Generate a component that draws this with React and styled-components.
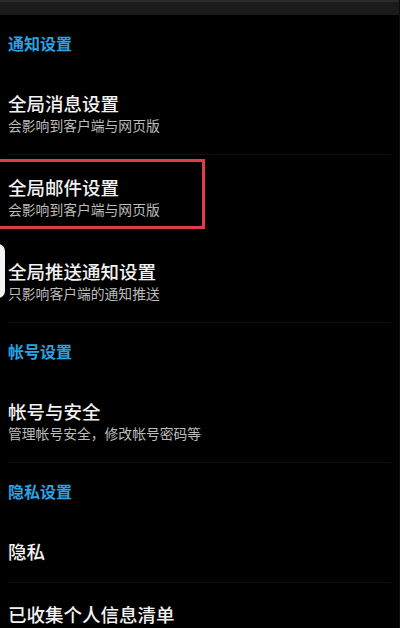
import React from "react";
import styled, { createGlobalStyle } from "styled-components";

const GlobalStyle = createGlobalStyle`
  body {
    margin: 0;
    background: #000;
    font-family: "Noto Sans CJK SC", "Noto Sans", sans-serif;
  }
`;

const Page = styled.div`
  width: 400px;
  height: 628px;
  overflow: hidden;
  background: #000;
  border-right: 1px solid #0d0d0d;
  box-sizing: border-box;
  position: relative;
`;

const TopBar = styled.div`
  height: 13px;
  background: #1b1b1b;
  border-top: 2px solid #2a2a2a;
`;

const SectionHeader = styled.div`
  height: 56px;
  display: flex;
  align-items: center;
  padding: 0 8px;
  color: #2ba2e4;
  font-size: 16px;
  font-weight: 700;
  line-height: 20px;
`;

const Item = styled.div`
  position: relative;
  height: ${(props) => props.h || 84}px;
  margin: 0 8px;
  display: flex;
  flex-direction: column;
  justify-content: center;
  gap: 3px;
  border-bottom: 1px solid ${(props) => (props.divider ? "#0f0f0f" : "transparent")};
  box-sizing: border-box;
`;

const Title = styled.div`
  color: #f2f2f2;
  font-size: 18.5px;
  font-weight: 500;
  line-height: 22px;
`;

const Sub = styled.div`
  color: #bcbcbc;
  font-size: 13.8px;
  line-height: 17px;
`;

const Highlight = styled.div`
  position: absolute;
  left: -12px;
  top: 4px;
  width: 209px;
  height: 70px;
  border: 3px solid #e33a4c;
  box-sizing: border-box;
  pointer-events: none;
`;

const EdgeTab = styled.div`
  position: absolute;
  left: -9px;
  top: 244px;
  width: 14px;
  height: 54px;
  border-radius: 7px;
  background: #f4f4f4;
`;

const sections = [
  {
    header: "通知设置",
    items: [
      { title: "全局消息设置", sub: "会影响到客户端与网页版", divider: true },
      { title: "全局邮件设置", sub: "会影响到客户端与网页版", marked: true },
      { title: "全局推送通知设置", sub: "只影响客户端的通知推送", divider: true },
    ],
  },
  {
    header: "帐号设置",
    items: [{ title: "帐号与安全", sub: "管理帐号安全，修改帐号密码等", divider: true }],
  },
  {
    header: "隐私设置",
    items: [
      { title: "隐私", h: 64, divider: true },
      { title: "已收集个人信息清单", h: 62 },
    ],
  },
];

export default function App() {
  return (
    <Page>
      <GlobalStyle />
      <TopBar />
      {sections.map((s) => (
        <React.Fragment key={s.header}>
          <SectionHeader>{s.header}</SectionHeader>
          {s.items.map((it) => (
            <Item key={it.title} h={it.h} divider={it.divider}>
              <Title>{it.title}</Title>
              {it.sub && <Sub>{it.sub}</Sub>}
              {it.marked && <Highlight />}
            </Item>
          ))}
        </React.Fragment>
      ))}
      <EdgeTab />
    </Page>
  );
}
